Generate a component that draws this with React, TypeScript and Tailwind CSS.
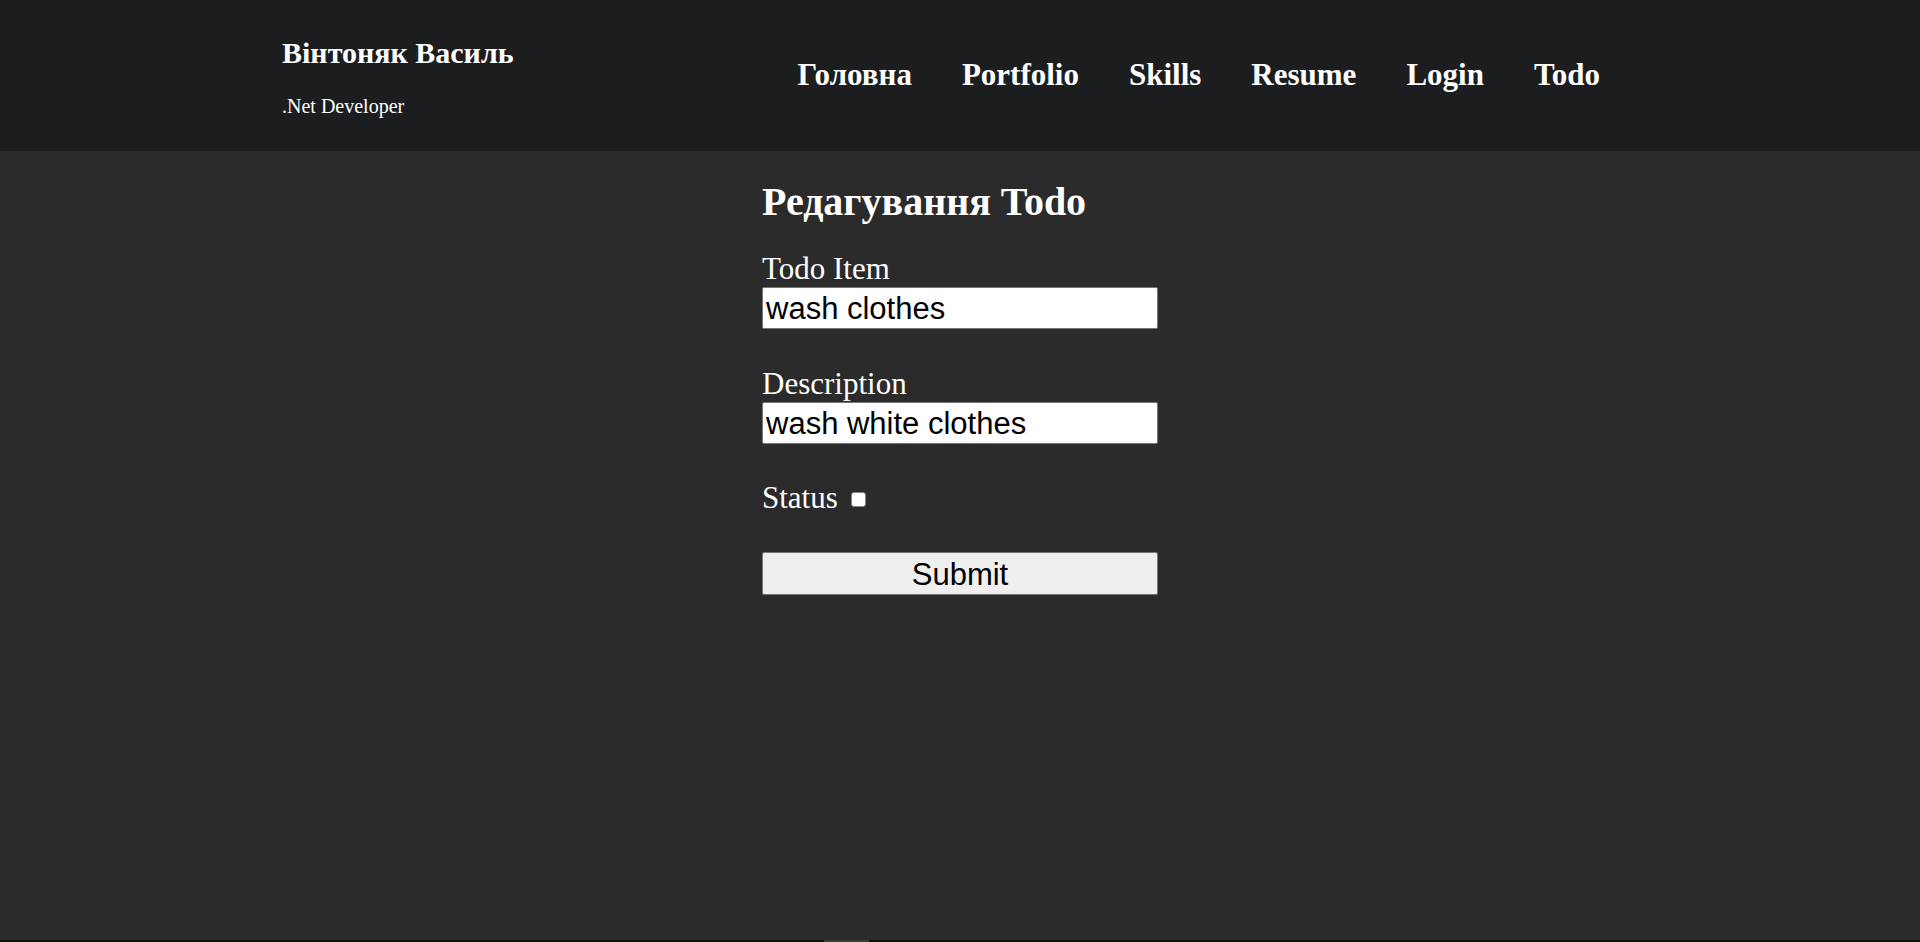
const navItems = ["Головна", "Portfolio", "Skills", "Resume", "Login", "Todo"];

function Header() {
  return (
    <header className="flex h-[151px] bg-[#1c1d1f] text-white">
      <div className="ml-[282px] pt-[38px]">
        <h1 className="text-[30px] font-bold leading-[30px]">Вінтоняк Василь</h1>
        <p className="mt-[28px] text-[20px] leading-[20px]">.Net Developer</p>
      </div>
      <nav className="ml-auto mr-[320px] pt-[59px]">
        <ul className="flex gap-[50px]">
          {navItems.map((item) => (
            <li key={item}>
              <a href="#" className="text-[31px] font-bold leading-[31px]">
                {item}
              </a>
            </li>
          ))}
        </ul>
      </nav>
    </header>
  );
}

function TextField({ label, value, top }: { label: string; value: string; top: string }) {
  return (
    <div className={top}>
      <label className="block text-[31px] leading-[31px]">{label}</label>
      <input
        type="text"
        defaultValue={value}
        className="mt-[3px] block h-[42px] w-[396px] rounded-[2px] border border-[#767676] bg-white px-[3px] pt-[3px] font-['Liberation_Sans',Arial,sans-serif] text-[31px] text-black outline-none"
      />
    </div>
  );
}

export default function App() {
  return (
    <div className="flex h-[942px] flex-col bg-[#2b2b2b] font-['Liberation_Serif','Times_New_Roman',serif] text-white">
      <Header />
      <main className="flex-1 pl-[762px]">
        <h2 className="mt-[31px] text-[40px] font-bold leading-[40px]">Редагування Todo</h2>
        <form>
          <TextField label="Todo Item" value="wash clothes" top="mt-[31px]" />
          <TextField label="Description" value="wash white clothes" top="mt-[39px]" />
          <div className="mt-[38px] flex items-center">
            <label className="text-[31px] leading-[31px]">Status</label>
            <input
              type="checkbox"
              className="ml-[13px] mt-[3px] h-[15px] w-[15px] appearance-none rounded-[3px] border border-[#858585] bg-white"
            />
          </div>
          <button
            type="button"
            className="mt-[39px] block h-[43px] w-[396px] rounded-[2px] border border-[#767676] bg-[#efefef] pt-[1px] font-['Liberation_Sans',Arial,sans-serif] text-[31px] leading-none text-black"
          >
            Submit
          </button>
        </form>
      </main>
      <div className="flex h-[2px] bg-[#0e0e0e]">
        <div className="ml-[824px] w-[45px] bg-[#3a3a3a]" />
      </div>
    </div>
  );
}
